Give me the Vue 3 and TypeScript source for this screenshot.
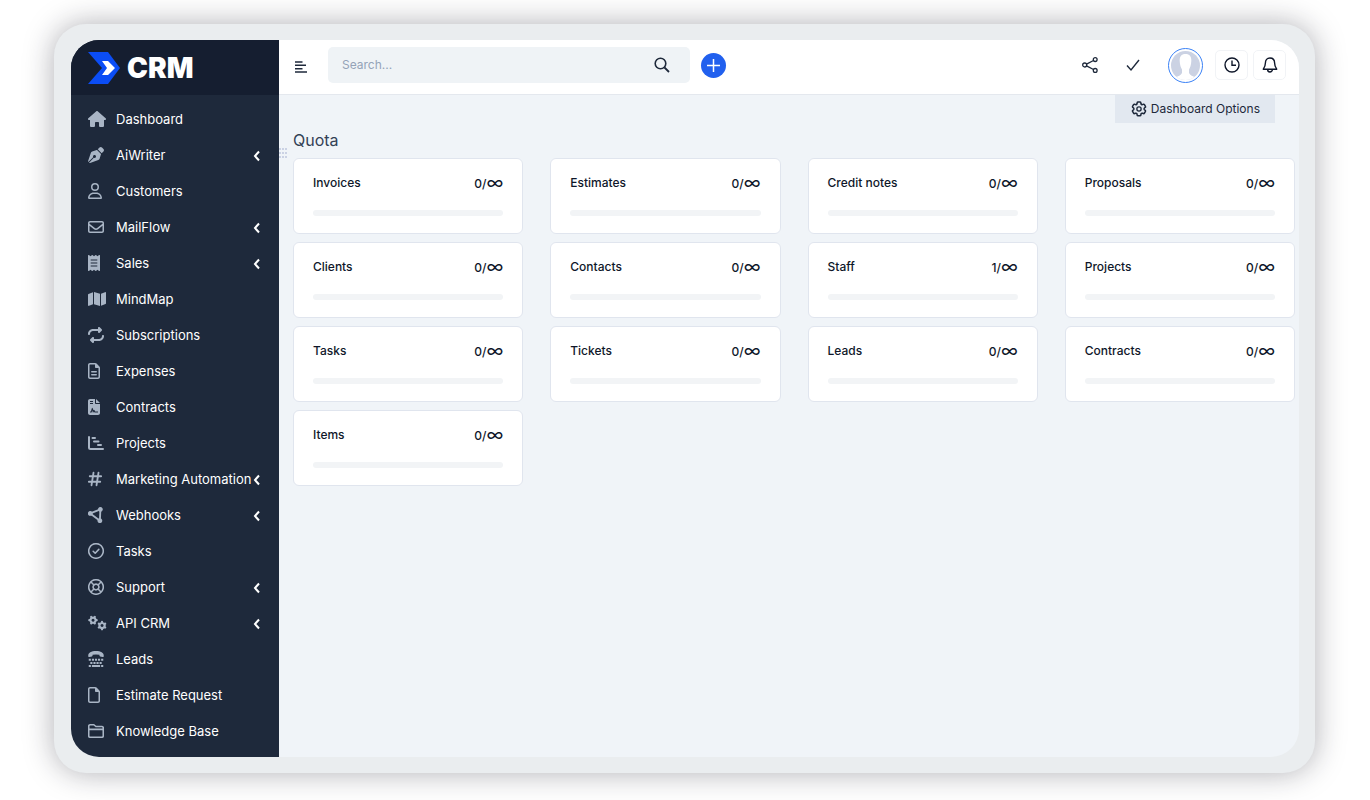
<script setup lang="ts">
import { ref } from 'vue'

interface Icon {
  box: string
  w: number
  h: number
  fill?: string
  stroke?: string
  sw?: number
}
interface NavItem {
  label: string
  icon: Icon
  sub?: boolean
}
interface Quota {
  label: string
  used: number
}

const fa = (width: number, fill?: string, stroke?: string, sw = 48): Icon => ({
  box: `0 0 ${width} 512`,
  w: width / 32,
  h: 16,
  fill,
  stroke,
  sw,
})

const nav: NavItem[] = [
  { label: 'Dashboard', icon: fa(576, 'M575.8 255.5c0 18-15 32.1-32 32.1h-32l.7 160.2c0 2.7-.2 5.4-.5 8.1V472c0 22.1-17.9 40-40 40H456c-1.1 0-2.2 0-3.3-.1c-1.4 .1-2.8 .1-4.2 .1H416 392c-22.1 0-40-17.9-40-40V448 384c0-17.7-14.3-32-32-32H256c-17.7 0-32 14.3-32 32v64 24c0 22.1-17.9 40-40 40H160 128.1c-1.5 0-3-.1-4.5-.2c-1.2 .1-2.4 .2-3.6 .2H104c-22.1 0-40-17.9-40-40V360c0-.9 0-1.9 .1-2.8V287.6H32c-18 0-32-14-32-32.1c0-9 3-17 10-24L266.4 8c7-7 15-8 22-8s15 2 21 7L564.8 231.5c8 7 12 15 11 24z') },
  { label: 'AiWriter', sub: true, icon: fa(512, 'M368.4 18.3L312.7 74.1 437.9 199.3l55.7-55.7c21.9-21.9 21.9-57.3 0-79.2L447.6 18.3c-21.9-21.9-57.3-21.9-79.2 0zM288 94.6l-9.2 2.8L134.7 140.6c-19.9 6-35.7 21.2-42.3 41L3.8 445.8c-3.8 11.3-1 23.9 7.3 32.4L164.7 324.7c-3-6.3-4.7-13.3-4.7-20.7c0-26.5 21.5-48 48-48s48 21.5 48 48s-21.5 48-48 48c-7.4 0-14.4-1.7-20.7-4.7L33.7 500.9c8.6 8.3 21.1 11.2 32.4 7.3l264.3-88.6c19.7-6.6 35-22.4 41-42.3l43.2-144.1 2.8-9.2L288 94.6z') },
  { label: 'Customers', icon: fa(448, 'M304 128a80 80 0 1 0 -160 0 80 80 0 1 0 160 0zM96 128a128 128 0 1 1 256 0A128 128 0 1 1 96 128zM49.3 464H398.7c-8.9-63.3-63.3-112-129-112H178.3c-65.7 0-120.1 48.7-129 112zM0 482.3C0 383.8 79.8 304 178.3 304h91.4C368.2 304 448 383.8 448 482.3c0 16.4-13.3 29.7-29.7 29.7H29.7C13.3 512 0 498.7 0 482.3z') },
  { label: 'MailFlow', sub: true, icon: fa(512, 'M64 112c-8.8 0-16 7.2-16 16v22.1L220.5 291.7c20.7 17 50.4 17 71.1 0L464 150.1V128c0-8.8-7.2-16-16-16H64zM48 212.2V384c0 8.8 7.2 16 16 16H448c8.8 0 16-7.2 16-16V212.2L322 328.8c-38.4 31.5-93.7 31.5-132 0L48 212.2zM0 128C0 92.7 28.7 64 64 64H448c35.3 0 64 28.7 64 64V384c0 35.3-28.7 64-64 64H64c-35.3 0-64-28.7-64-64V128z') },
  { label: 'Sales', sub: true, icon: fa(384, 'M14 2.2C22.5-1.7 32.5-.3 39.6 5.8L80 40.4 120.4 5.8c9-7.7 22.3-7.7 31.2 0L192 40.4 232.4 5.8c9-7.7 22.3-7.7 31.2 0L304 40.4 344.4 5.8c7.1-6.1 17.1-7.5 25.6-3.6s14 12.4 14 21.8V488c0 9.4-5.5 17.9-14 21.8s-18.5 2.5-25.6-3.6L304 471.6l-40.4 34.6c-9 7.7-22.3 7.7-31.2 0L192 471.6l-40.4 34.6c-9 7.7-22.3 7.7-31.2 0L80 471.6 39.6 506.2c-7.1 6.1-17.1 7.5-25.6 3.6S0 497.4 0 488V24C0 14.6 5.5 6.1 14 2.2zM96 144c-8.8 0-16 7.2-16 16s7.2 16 16 16H288c8.8 0 16-7.2 16-16s-7.2-16-16-16H96zM80 352c0 8.8 7.2 16 16 16H288c8.8 0 16-7.2 16-16s-7.2-16-16-16H96c-8.8 0-16 7.2-16 16zM96 240c-8.8 0-16 7.2-16 16s7.2 16 16 16H288c8.8 0 16-7.2 16-16s-7.2-16-16-16H96z') },
  { label: 'MindMap', icon: fa(576, 'M384 476.1L192 421.2V35.9L384 90.8V476.1zm32-1.2V88.4L543.1 37.5c15.8-6.3 32.9 5.3 32.9 22.3V394.6c0 9.8-6 18.6-15.1 22.3L416 474.8zM15.1 95.1L160 37.2V423.6L32.9 474.5C17.1 480.8 0 469.2 0 452.2V117.4c0-9.8 6-18.6 15.1-22.3z') },
  { label: 'Subscriptions', icon: fa(512, 'M0 224c0 17.7 14.3 32 32 32s32-14.3 32-32c0-53 43-96 96-96H320v32c0 12.9 7.8 24.6 19.8 29.6s25.7 2.2 34.9-6.9l64-64c12.5-12.5 12.5-32.8 0-45.3l-64-64c-9.2-9.2-22.9-11.9-34.9-6.9S320 19.1 320 32V64H160C71.6 64 0 135.6 0 224zm512 64c0-17.7-14.3-32-32-32s-32 14.3-32 32c0 53-43 96-96 96H192V352c0-12.9-7.8-24.6-19.8-29.6s-25.7-2.2-34.9 6.9l-64 64c-12.5 12.5-12.5 32.8 0 45.3l64 64c9.2 9.2 22.9 11.9 34.9 6.9s19.8-16.6 19.8-29.6V448H352c88.4 0 160-71.6 160-160z') },
  { label: 'Expenses', icon: fa(384, 'M64 464c-8.8 0-16-7.2-16-16V64c0-8.8 7.2-16 16-16H224v80c0 17.7 14.3 32 32 32h80V448c0 8.8-7.2 16-16 16H64zM64 0C28.7 0 0 28.7 0 64V448c0 35.3 28.7 64 64 64H320c35.3 0 64-28.7 64-64V154.5c0-17-6.7-33.3-18.7-45.3L274.7 18.7C262.7 6.7 246.5 0 229.5 0H64zm56 256c-13.3 0-24 10.7-24 24s10.7 24 24 24H264c13.3 0 24-10.7 24-24s-10.7-24-24-24H120zm0 96c-13.3 0-24 10.7-24 24s10.7 24 24 24H264c13.3 0 24-10.7 24-24s-10.7-24-24-24H120z') },
  { label: 'Contracts', icon: fa(384, 'M64 0C29 0 0 29 0 64V448c0 35 29 64 64 64H320c35 0 64-29 64-64V160H256c-18 0-32-14-32-32V0H64zM256 0V128H384L256 0zM64 64H160V96H64zM64 128H160V160H64zM64 432V400H92L120 304Q134 262 154 304L172 356Q192 330 214 366L228 400H320V432H208L190 398L172 432H152L136 360L116 432z') },
  { label: 'Projects', icon: fa(512, undefined, 'M32 64V400Q32 448 80 448H480M144 96H224M192 208H336M320 320H416', 64) },
  { label: 'Marketing Automation', sub: true, icon: fa(448, undefined, 'M176 56L112 456M336 56L272 456M56 168H424M24 344H392', 58) },
  { label: 'Webhooks', sub: true, icon: fa(512, 'M72 130a76 76 0 1 0 .1 0zM396 0a76 76 0 1 0 .1 0zM380 362a76 76 0 1 0 .1 0z', 'M72 206L396 74L380 438Z', 60) },
  { label: 'Tasks', icon: fa(512, undefined, 'M256 24a232 232 0 1 0 .1 0zM166 264L230 326L346 204', 50) },
  { label: 'Support', sub: true, icon: fa(512, undefined, 'M256 24a232 232 0 1 0 .1 0zM256 164a92 92 0 1 0 .1 0zM96 96L190 190M416 96L322 190M96 416L190 322M416 416L322 322', 50) },
  { label: 'API CRM', sub: true, icon: { box: '0 0 20 16', w: 20, h: 16, stroke: 'M5 2.600a2.600 2.600 0 1 0 .1 0zM8.700 5.200H7.600M1.300 5.200H2.400M6.850 8.400L6.300 7.450M3.150 8.400L3.700 7.450M6.850 2L6.300 2.950M3.150 2L3.700 2.950M14 8a2.600 2.600 0 1 0 .1 0zM14 6.900V8M14 14.300V13.200M17.200 8.750L16.250 9.300M10.800 8.750L11.750 9.300M17.200 12.450L16.250 11.900M10.800 12.450L11.750 11.900', sw: 2.2 } },
  { label: 'Leads', icon: fa(512, 'M8 156C0 60 110 0 256 0S512 60 504 156C502 190 488 196 468 192L388 172C372 168 366 160 366 144V122Q256 96 146 122V144C146 160 140 168 124 172L44 192C24 196 10 190 8 156zM24 248h68v64H24zM124 248h68v64h-68zM222 248h68v64h-68zM320 248h68v64h-68zM420 248h68v64h-68zM74 348h68v64H74zM174 348h68v64h-68zM272 348h68v64h-68zM370 348h68v64h-68zM24 448h68v64H24zM124 448h264v64H124zM420 448h68v64h-68z') },
  { label: 'Estimate Request', icon: fa(384, 'M320 464c8.8 0 16-7.2 16-16V160H256c-17.7 0-32-14.3-32-32V48H64c-8.8 0-16 7.2-16 16V448c0 8.8 7.2 16 16 16H320zM0 64C0 28.7 28.7 0 64 0H229.5c17 0 33.300 6.700 45.300 18.700l90.500 90.500c12 12 18.700 28.300 18.700 45.300V448c0 35.300-28.700 64-64 64H64c-35.300 0-64-28.700-64-64V64z') },
  { label: 'Knowledge Base', icon: fa(512, undefined, 'M24 96Q24 56 64 56H188L252 112H448Q488 112 488 152V416Q488 456 448 456H64Q24 456 24 416ZM24 204H488', 50) },
]

const quotas: Quota[] = [
  { label: 'Invoices', used: 0 },
  { label: 'Estimates', used: 0 },
  { label: 'Credit notes', used: 0 },
  { label: 'Proposals', used: 0 },
  { label: 'Clients', used: 0 },
  { label: 'Contacts', used: 0 },
  { label: 'Staff', used: 1 },
  { label: 'Projects', used: 0 },
  { label: 'Tasks', used: 0 },
  { label: 'Tickets', used: 0 },
  { label: 'Leads', used: 0 },
  { label: 'Contracts', used: 0 },
  { label: 'Items', used: 0 },
]

const query = ref('')
</script>

<template>
  <div class="page">
    <div class="device">
      <div class="screen">
        <aside class="sidebar">
          <a class="brand" href="#">
            <svg class="brand-mark" width="33" height="32" viewBox="0 0 33 32" aria-hidden="true">
              <path d="M0 0H20L32 16L20 32H0L14 16Z" fill="#0b4df5" />
              <path d="M14 9H20L27 16L20 23H14L19 16Z" fill="#fff" />
            </svg>
            <span>CRM</span>
          </a>
          <nav class="nav" aria-label="Main">
            <a v-for="item in nav" :key="item.label" class="nav-item" href="#">
              <span class="nav-icon">
                <svg :width="item.icon.w" :height="item.icon.h" :viewBox="item.icon.box" aria-hidden="true">
                  <path v-if="item.icon.fill" :d="item.icon.fill" fill="currentColor" fill-rule="evenodd" />
                  <path
                    v-if="item.icon.stroke"
                    :d="item.icon.stroke"
                    fill="none"
                    stroke="currentColor"
                    :stroke-width="item.icon.sw"
                    stroke-linecap="round"
                    stroke-linejoin="round"
                  />
                </svg>
              </span>
              <span class="nav-label">{{ item.label }}</span>
              <svg v-if="item.sub" class="chevron" width="8" height="12" viewBox="0 0 8 12" aria-hidden="true">
                <path d="M6 1.500L2 6L6 10.500" />
              </svg>
            </a>
          </nav>
        </aside>

        <div class="content">
          <header class="topbar">
            <button class="plain menu" type="button" aria-label="Toggle menu">
              <svg width="12" height="12" viewBox="0 0 12 12" aria-hidden="true">
                <path d="M0 1H7.500M0 4.300H11M0 7.700H7.500M0 11H12" fill="none" stroke="#1e293b" stroke-width="1.600" />
              </svg>
            </button>
            <label class="search">
              <input v-model="query" type="search" placeholder="Search..." aria-label="Search" />
              <svg width="16" height="16" viewBox="0 0 16 16" aria-hidden="true">
                <circle cx="6.500" cy="6.500" r="5.300" fill="none" stroke="#1e293b" stroke-width="1.600" />
                <path d="M10.500 10.500L15 15" stroke="#1e293b" stroke-width="1.800" />
              </svg>
            </label>
            <button class="plain add" type="button" aria-label="Create">
              <svg width="13" height="13" viewBox="0 0 13 13" aria-hidden="true">
                <path d="M6.500 0V13M0 6.500H13" stroke="#fff" stroke-width="1.500" />
              </svg>
            </button>
            <div class="actions">
              <button class="plain share" type="button" aria-label="Share">
                <svg width="16" height="16" viewBox="0 0 16 16" fill="none" stroke="#1e293b" stroke-width="1.300" aria-hidden="true">
                  <circle cx="2.700" cy="8" r="2" />
                  <circle cx="13.200" cy="2.600" r="1.900" />
                  <circle cx="13.200" cy="13.400" r="1.900" />
                  <path d="M4.500 7.100L11.500 3.500M4.500 8.900L11.500 12.500" />
                </svg>
              </button>
              <button class="plain check" type="button" aria-label="To-do items">
                <svg width="14" height="14" viewBox="0 0 14 14" aria-hidden="true">
                  <path d="M1 7.500L5 12L13 2" fill="none" stroke="#1e293b" stroke-width="1.400" />
                </svg>
              </button>
              <button class="plain avatar" type="button" aria-label="Profile">
                <svg width="29" height="29" viewBox="0 0 29 29" aria-hidden="true">
                  <defs>
                    <clipPath id="face"><circle cx="14.500" cy="14.500" r="14.500" /></clipPath>
                  </defs>
                  <g clip-path="url(#face)">
                    <rect width="29" height="29" fill="#cbd2e3" />
                    <path d="M14.500 3C10 3 8.500 6 8.700 10C8.800 14 10 17 11 18.500V22C10 24.500 7 25 4.500 26.500V30H24.500V26.500C22 25 19 24.500 18 22V18.500C19 17 20.200 14 20.300 10C20.500 6 19 3 14.500 3Z" fill="#fff" />
                  </g>
                </svg>
              </button>
              <button class="plain boxed" type="button" aria-label="Timers">
                <svg width="16" height="16" viewBox="0 0 16 16" fill="none" stroke="#0f172a" stroke-width="1.400" aria-hidden="true">
                  <circle cx="8" cy="8" r="7" />
                  <path d="M8 3.500V8.200H12" />
                </svg>
              </button>
              <button class="plain boxed" type="button" aria-label="Notifications">
                <svg width="16" height="16" viewBox="0 0 16 16" fill="none" stroke="#0f172a" stroke-width="1.400" stroke-linejoin="round" aria-hidden="true">
                  <path d="M8 1C5 1 3.400 3.200 3.400 6C3.400 9 2.500 10.500 1.300 12.200H14.700C13.500 10.500 12.600 9 12.600 6C12.600 3.200 11 1 8 1ZM5.600 12.200C5.600 16 10.400 16 10.400 12.200" />
                </svg>
              </button>
            </div>
          </header>

          <main class="main">
            <button class="plain options" type="button">
              <svg width="16" height="16" viewBox="0 0 24 24" fill="none" stroke="currentColor" stroke-width="2" stroke-linejoin="round" aria-hidden="true">
                <path d="M9.600 3.900c.1-.5.500-.9 1.100-.9h2.600c.6 0 1 .4 1.100.9l.2 1.300c.1.400.3.700.6.900l.2.100c.3.200.7.200 1.100.1l1.200-.5c.5-.2 1.100 0 1.400.5l1.300 2.200c.3.500.2 1.100-.3 1.400l-1 .8c-.3.300-.4.600-.4 1v.3c0 .4.100.7.400 1l1 .8c.4.400.5 1 .3 1.400l-1.300 2.200c-.3.500-.9.700-1.400.5l-1.200-.4c-.4-.1-.8-.1-1.100.1l-.2.100c-.3.200-.5.500-.6.900l-.2 1.300c-.1.500-.5.900-1.100.9h-2.600c-.6 0-1-.4-1.100-.9l-.2-1.300c-.1-.4-.3-.7-.6-.9l-.2-.1c-.3-.2-.7-.2-1.100-.1l-1.200.4c-.5.200-1.100 0-1.400-.5l-1.300-2.200c-.3-.5-.2-1.100.3-1.400l1-.8c.3-.3.4-.6.400-1v-.3c0-.4-.1-.7-.4-1l-1-.8c-.4-.4-.5-1-.3-1.400l1.300-2.200c.3-.5.900-.7 1.400-.5l1.200.5c.4.100.8.100 1.100-.1l.2-.1c.3-.2.500-.5.600-.9z" transform="translate(-1.800 -1.800) scale(1.150)" />
                <circle cx="12" cy="12" r="3.200" />
              </svg>
              Dashboard Options
            </button>
            <section class="widget">
              <svg class="grip" width="8" height="12" viewBox="0 0 8 12" aria-hidden="true">
                <path d="M0 1H2M3 1H5M6 1H8M0 5H2M3 5H5M6 5H8M0 9H2M3 9H5M6 9H8" />
              </svg>
              <h2>Quota</h2>
              <div class="grid">
                <article v-for="q in quotas" :key="q.label" class="card">
                  <div class="card-row">
                    <span>{{ q.label }}</span>
                    <span class="count">{{ q.used }}/<span class="unlimited">∞</span></span>
                  </div>
                  <div class="track" />
                </article>
              </div>
            </section>
          </main>
        </div>
      </div>
    </div>
  </div>
</template>

<style>
body {
  background: #fff;
}
</style>

<style scoped>
.page {
  box-sizing: border-box;
  display: flex;
  min-height: 100vh;
  padding: 24px 55px 27px 54px;
  font-family: Inter, "Liberation Sans", sans-serif;
  font-size: 12px;
  line-height: 20px;
  color: #0f172a;
}
.device {
  box-sizing: border-box;
  display: flex;
  flex: 1;
  min-width: 0;
  padding: 16px 16px 16px 17px;
  border-radius: 32px;
  background: #eaedef;
  box-shadow: 0 0 30px rgba(25, 25, 40, 0.35);
}
.screen {
  display: flex;
  flex: 1;
  min-width: 0;
  overflow: hidden;
  border-radius: 28px;
  background: #f0f4f8;
}
.sidebar {
  flex: none;
  width: 208px;
  background: #1e293b;
}
.brand {
  box-sizing: border-box;
  display: flex;
  align-items: center;
  gap: 6px;
  height: 55px;
  padding-left: 17px;
  background: #151e30;
  color: #fff;
  font-size: 28px;
  font-weight: 900;
  line-height: 32px;
  text-decoration: none;
}
.nav {
  padding: 6px 0 3px;
}
.nav-item {
  display: flex;
  align-items: center;
  height: 36px;
  padding: 0 18px 0 17px;
  color: #fff;
  font-size: 13px;
  text-decoration: none;
}
.nav-icon {
  display: flex;
  width: 28px;
  color: #a9b5c5;
}
.nav-label {
  flex: 1;
  white-space: nowrap;
}
.chevron {
  flex: none;
  margin-top: 2px;
}
.chevron path {
  fill: none;
  stroke: #fff;
  stroke-width: 2;
}
.content {
  display: flex;
  flex: 1;
  flex-direction: column;
  min-width: 0;
}
.plain {
  display: flex;
  align-items: center;
  justify-content: center;
  padding: 0;
  border: 0;
  background: none;
  color: inherit;
  font: inherit;
  cursor: pointer;
}
.topbar {
  box-sizing: border-box;
  display: flex;
  align-items: center;
  height: 55px;
  padding: 0 13px 4px 16px;
  border-bottom: 1px solid #e4e8ee;
  background: #fff;
}
.menu {
  margin: 3px 21px 0 0;
}
.search {
  box-sizing: border-box;
  display: flex;
  flex: 0 1 362px;
  align-items: center;
  height: 36px;
  padding: 0 20px 0 14px;
  border-radius: 5px;
  background: #eff3f6;
}
.search input {
  flex: 1;
  min-width: 0;
  padding: 0;
  border: 0;
  outline: 0;
  background: none;
  color: #1e293b;
  font: inherit;
}
.search input::placeholder {
  color: #94a3b8;
  opacity: 1;
}
.add {
  flex: none;
  width: 25px;
  height: 25px;
  margin-left: 11px;
  border-radius: 50%;
  background: #2160ee;
}
.actions {
  display: flex;
  align-items: center;
  margin-left: auto;
}
.check {
  margin-left: 28px;
}
.avatar {
  box-sizing: border-box;
  width: 35px;
  height: 35px;
  margin: 0 7px 0 28px;
  border: 1px solid #3b82f6;
  border-radius: 50%;
}
.boxed {
  box-sizing: border-box;
  width: 33px;
  height: 30px;
  margin-left: 5px;
  border: 1px solid #f1f3f6;
  border-radius: 5px;
}
.main {
  padding: 0 4px 24px 14px;
}
.options {
  gap: 4px;
  height: 28px;
  margin: 0 20px 0 auto;
  padding: 0 15px 0 16px;
  background: #e2e8f0;
  color: #1e293b;
}
.widget {
  position: relative;
}
.grip {
  position: absolute;
  top: 25px;
  left: -14px;
}
.grip path {
  fill: none;
  stroke: #cbd2e4;
  stroke-width: 2;
}
h2 {
  margin: 0;
  padding: 5px 0 6px;
  color: #334155;
  font-size: 16px;
  font-weight: 400;
  line-height: 24px;
}
.grid {
  display: grid;
  grid-template-columns: repeat(4, 1fr);
  gap: 8px 27px;
}
.card {
  box-sizing: border-box;
  height: 76px;
  padding: 14px 19px 0;
  border: 1px solid #e0e5ee;
  border-radius: 6px;
  background: #fff;
}
.card-row {
  display: flex;
  justify-content: space-between;
  height: 20px;
  font-weight: 500;
}
.unlimited {
  font-size: 18px;
  font-weight: 400;
  vertical-align: -1px;
}
.track {
  height: 6px;
  margin-top: 17px;
  border-radius: 3px;
  background: #f2f4f6;
}
</style>
